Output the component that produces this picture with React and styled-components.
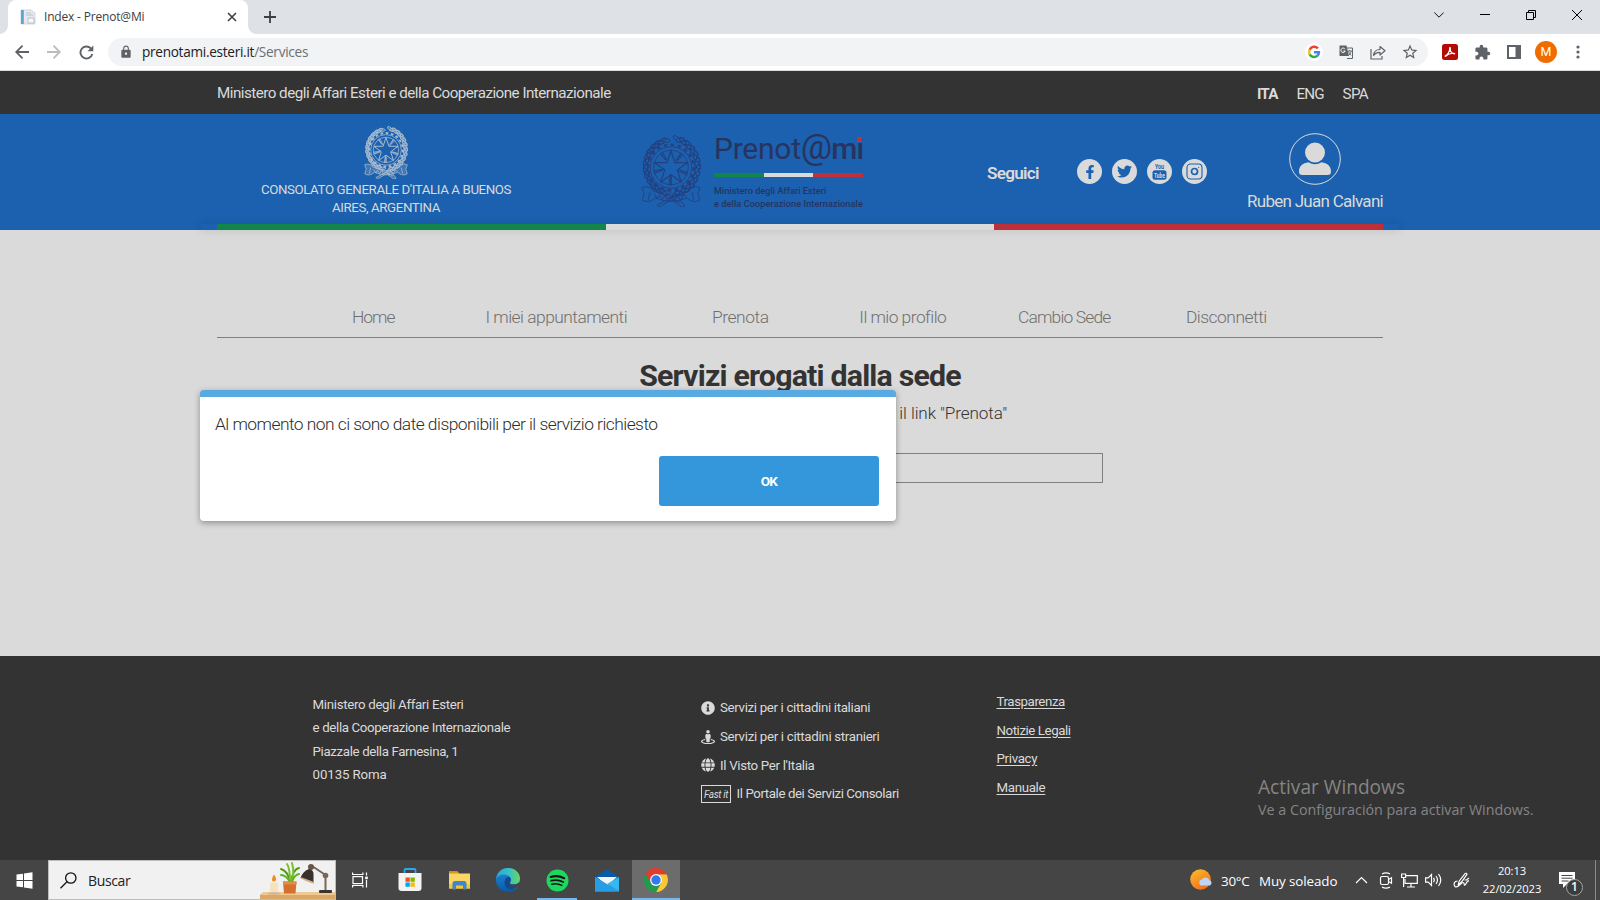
import React from 'react';
import styled, { createGlobalStyle, css } from 'styled-components';
import { FaTwitter, FaFacebookF, FaInfoCircle, FaStreetView, FaGlobe } from 'react-icons/fa';
import { MdExtension, MdStarOutline, MdLock } from 'react-icons/md';

const GlobalStyle = createGlobalStyle`
  *, *::before, *::after { box-sizing: border-box; }
  body { margin: 0; overflow: hidden; }
  svg { display: block; flex: none; }
`;

const web = css`font-family: Roboto, "Liberation Sans", sans-serif;`;
const ui = css`font-family: "Open Sans", "Noto Sans", sans-serif;`;

const Screen = styled.div`
  position: relative;
  display: flex;
  flex-direction: column;
  width: 1600px;
  height: 900px;
  overflow: hidden;
  background: #dadada;
`;

const Text = styled.span`
  white-space: nowrap;
  letter-spacing: ${(p) => p.$ls || 0}px;
`;

/* ---------- browser window ---------- */
const TabStrip = styled.div`
  ${ui}
  display: flex;
  height: 34px;
  padding-left: 8px;
  background: #dee1e6;
`;
const Tab = styled.div`
  position: relative;
  display: flex;
  align-items: center;
  width: 240px;
  padding: 0 10px 0 12px;
  border-radius: 8px 8px 0 0;
  background: #fff;
  color: #3c4043;
  font-size: 12px;
  &::before, &::after {
    content: '';
    position: absolute;
    bottom: 0;
    width: 8px;
    height: 8px;
  }
  &::before { left: -8px; background: radial-gradient(circle at 0 0, transparent 7.5px, #fff 8px); }
  &::after { right: -8px; background: radial-gradient(circle at 100% 0, transparent 7.5px, #fff 8px); }
`;
const TabTitle = styled(Text)`flex: 1; margin-left: 8px; line-height: 18px; padding-bottom: 1px;`;
const NewTab = styled.div`
  display: flex;
  align-items: center;
  justify-content: center;
  width: 44px;
`;
const WindowControls = styled.div`display: flex; margin-left: auto; height: 29px;`;
const WindowControl = styled.div`
  display: flex;
  align-items: center;
  justify-content: center;
  width: 46px;
`;
const Toolbar = styled.div`
  ${ui}
  display: flex;
  align-items: center;
  height: 37px;
  padding: 0 6px;
  background: #fff;
  border-bottom: 1px solid #d8dadd;
`;
const ToolCell = styled.div`
  display: flex;
  align-items: center;
  justify-content: center;
  width: 32px;
  height: 28px;
  color: #5f6368;
`;
const AddressBar = styled.div`
  display: flex;
  align-items: center;
  flex: 1;
  height: 28px;
  margin-left: 6px;
  margin-right: 6px;
  padding: 0 2px 0 11px;
  border-radius: 14px;
  background: #f1f3f4;
  color: #202124;
  font-size: 13.6px;
`;
const Url = styled(Text)`flex: 1; margin-left: 9px; line-height: 20px; em { font-style: normal; color: #6b6f74; }`;
const Avatar = styled.div`
  ${web}
  width: 22px;
  height: 22px;
  border-radius: 50%;
  background: #ef6c00;
  color: #fff;
  font-size: 12.5px;
  line-height: 22px;
  text-align: center;
`;

/* ---------- site header ---------- */
const TopBar = styled.div`
  ${web}
  display: flex;
  align-items: center;
  height: 43px;
  padding: 1px 232px 0 217px;
  background: #333;
  color: #dadada;
  font-size: 15.2px;
`;
const Languages = styled.div`display: flex; gap: 18.8px; margin-left: auto; padding-top: 1px;`;
const Language = styled(Text)`font-weight: ${(p) => (p.$active ? 700 : 400)};`;
const Header = styled.header`
  ${web}
  display: flex;
  flex-direction: column;
  align-items: center;
  height: 116px;
  background: #1b61af;
  color: #dadada;
`;
const HeaderInner = styled.div`display: flex; width: 1166px; height: 110px;`;
const Consulate = styled.div`
  display: flex;
  flex-direction: column;
  align-items: center;
  width: 338px;
  margin-right: 2px;
  padding-top: 12px;
  font-size: 13.3px;
  line-height: 18px;
  svg { margin-bottom: 2px; }
`;
const Brand = styled.div`display: flex; width: 430px; padding: 21px 0 0 83px; color: #28345f;`;
const BrandCopy = styled.div`display: flex; flex-direction: column; width: 149px; margin-left: 12px;`;
const WordMark = styled.div`
  display: flex;
  align-items: baseline;
  height: 38px;
  font-size: 30px;
  font-weight: 400;
  line-height: 25px;
  letter-spacing: -.25px;
`;
const At = styled.span`width: 31px; font-size: 35px; font-weight: 400; letter-spacing: -1px;`;
const Mi = styled.span`position: relative; font-weight: 500; letter-spacing: -.9px;`;
const RedDot = styled.i`position: absolute; right: 1px; top: 1px; width: 5px; height: 5px; background: #cf2b31;`;
const BrandStripe = styled.div`
  height: 4px;
  margin-bottom: 8px;
  background: linear-gradient(90deg, #12864a 0 33.3%, #dadada 33.3% 66.6%, #c12f3a 66.6%);
`;
const BrandLine = styled(Text)`font-size: 9.2px; font-weight: 500; line-height: 12.5px;`;
const Social = styled.div`display: flex; width: 260px; padding-top: 45px;`;
const Follow = styled(Text)`width: 90px; font-size: 17.2px; font-weight: 600; line-height: 29px;`;
const SocialList = styled.div`display: flex; gap: 10px;`;
const SocialButton = styled.div`
  display: flex;
  align-items: center;
  justify-content: center;
  width: 25px;
  height: 25px;
  border-radius: 50%;
  background: #dadada;
  color: #1b61af;
`;
const User = styled.div`
  display: flex;
  flex-direction: column;
  align-items: center;
  width: 136px;
  padding-top: 19px;
  font-size: 17px;
`;
const UserName = styled(Text)`line-height: 24px; margin-top: 3.5px;`;
const Tricolor = styled.div`
  width: 1198px;
  height: 6px;
  padding: 0 16px;
  box-shadow: 0 0 10px rgba(0, 0, 0, .14);
  &::before {
    content: '';
    display: block;
    height: 6px;
    background: linear-gradient(90deg, #12864a 0 389px, #dadada 389px 777px, #bb3039 777px);
  }
`;

/* ---------- page body ---------- */
const Main = styled.main`
  ${web}
  position: relative;
  display: flex;
  flex-direction: column;
  align-items: center;
  height: 426px;
  padding-top: 76px;
  color: #333;
`;
const Nav = styled.nav`
  display: grid;
  grid-template-columns: 183px 183px 185px 140px 183px 141px;
  width: 1166px;
  height: 32px;
  padding-left: 64.8px;
  border-bottom: 1px solid #7f7f7f;
  color: #6f6f6f;
  font-size: 17.4px;
  font-weight: 300;
  line-height: 23px;
  text-align: center;
`;
const Title = styled.h1`
  margin: 18px 0 6px;
  font-size: 30.3px;
  font-weight: 700;
  line-height: 40px;
  letter-spacing: -.8px;
  white-space: nowrap;
`;
const Intro = styled.p`
  align-self: flex-end;
  margin: 0 593px 28px 0;
  font-size: 17.1px;
  font-weight: 300;
  line-height: 23px;
`;
const SearchBox = styled.div`width: 606px; height: 30px; border: 1px solid #7f7f7f;`;
const Dialog = styled.div`
  position: absolute;
  left: 200px;
  top: 160px;
  display: flex;
  flex-direction: column;
  width: 696px;
  height: 131px;
  padding: 16px 17px 15px 15px;
  border-top: 7px solid #58aae3;
  border-radius: 4px;
  background: #fff;
  box-shadow: 0 2px 6px rgba(0, 0, 0, .35);
  color: #2c2c2c;
  font-size: 17.4px;
  font-weight: 300;
  line-height: 23px;
`;
const OkButton = styled.button`
  ${web}
  align-self: flex-end;
  width: 220px;
  height: 50px;
  margin-top: auto;
  padding-bottom: 2px;
  border: 0;
  border-radius: 3px;
  background: #3597db;
  color: #fff;
  font-size: 13.6px;
  font-weight: 700;
  letter-spacing: -.7px;
`;

/* ---------- site footer ---------- */
const Footer = styled.footer`
  ${web}
  display: flex;
  height: 204px;
  padding: 31px 0 0 312px;
  background: #333;
  color: #dadada;
  font-size: 13.3px;
`;
const Address = styled.div`
  display: flex;
  flex-direction: column;
  width: 389px;
  padding: 6px 0 0 .6px;
  line-height: 23.3px;
`;
const Services = styled.div`display: flex; flex-direction: column; width: 295px; padding-top: 6.5px;`;
const Service = styled.div`display: flex; align-items: center; gap: 5px; height: 28.7px;`;
const FastIt = styled.span`
  width: 30px;
  height: 18px;
  margin-right: .5px;
  border: 1px solid #dadada;
  font-size: 10px;
  font-style: italic;
  line-height: 17px;
  text-align: center;
  letter-spacing: -.35px;
`;
const Legal = styled.div`
  display: flex;
  flex-direction: column;
  padding: 1px 0 0 .5px;
  line-height: 28.6px;
  span { text-decoration: underline; text-underline-offset: 2px; }
`;
const Watermark = styled.div`
  ${ui}
  position: absolute;
  left: 1258px;
  top: 774px;
  display: flex;
  flex-direction: column;
  color: #858585;
  font-size: 14.3px;
  line-height: 20px;
`;
const WatermarkTitle = styled(Text)`font-size: 19.1px; line-height: 27px; margin-bottom: -1px;`;

/* ---------- taskbar ---------- */
const Taskbar = styled.div`
  ${ui}
  display: flex;
  height: 40px;
  background: #454545;
  color: #fff;
`;
const Start = styled.div`display: flex; align-items: center; justify-content: center; width: 48px;`;
const TaskSearch = styled.div`
  display: flex;
  align-items: center;
  width: 288px;
  padding-left: 11px;
  border: 1px solid #bdbdbd;
  background: #f1f1f1;
  color: #222;
  font-size: 14px;
`;
const SearchLabel = styled(Text)`flex: 1; margin-left: 11px;`;
const Apps = styled.div`display: flex; gap: 1.33px;`;
const AppSlot = styled.div`
  display: flex;
  align-items: center;
  justify-content: center;
  width: 48px;
  padding-left: ${(p) => p.$nudge || 0}px;
  background: ${(p) => (p.$active ? '#6c6c6c' : 'transparent')};
  background-image: ${(p) => (p.$bar ? 'linear-gradient(#76b9ed, #76b9ed)' : 'none')};
  background-size: ${(p) => p.$bar || 0}px 2px;
  background-position: center bottom;
  background-repeat: no-repeat;
`;
const Tray = styled.div`display: flex; align-items: center; margin-left: auto;`;
const Weather = styled.div`
  display: flex;
  align-items: center;
  width: 164px;
  font-size: 13.4px;
`;
const Temp = styled(Text)`width: 38px; margin-left: 8px; padding-top: 1px;`;
const Sky = styled(Text)`padding-top: 1px;`;
const TrayCell = styled.div`
  display: flex;
  align-items: center;
  justify-content: center;
  width: ${(p) => p.$w}px;
`;
const Clock = styled.div`
  display: flex;
  flex-direction: column;
  align-items: center;
  width: 76px;
  margin-left: 3px;
  font-size: 11.2px;
  line-height: 18px;
`;
const Notifications = styled.div`
  position: relative;
  width: 46px;
  height: 40px;
  padding: 12px 0 0 9px;
  border-right: 1px solid #8a8a8a;
  margin-right: 4px;
`;
const Badge = styled.span`
  position: absolute;
  left: 16px;
  top: 19px;
  width: 17px;
  height: 17px;
  border: 1px solid #a5a5a5;
  border-radius: 50%;
  background: #3c3c3c;
  font-size: 12px;
  font-weight: 600;
  line-height: 14px;
  text-align: center;
`;

/* ---------- drawings ---------- */
const star = (cx, cy, R, r) =>
  Array.from({ length: 10 }, (_, i) => {
    const a = (-90 + i * 36) * (Math.PI / 180);
    const d = i % 2 ? r : R;
    return `${(cx + d * Math.cos(a)).toFixed(2)},${(cy + d * Math.sin(a)).toFixed(2)}`;
  }).join(' ');

const leafAngles = Array.from({ length: 12 }, (_, i) => 105 + i * 13.5);

function Emblem({ width, height, color, fill = 'none', weight = 0.8, opacity = 1 }) {
  const leaves = (mirror) =>
    leafAngles.map((deg) => {
      const a = (deg * Math.PI) / 180;
      const x = 30.5 + 25.5 * Math.cos(a) * (mirror ? -1 : 1);
      const y = 31 + 27 * Math.sin(a);
      const turn = mirror ? -deg - 90 : deg + 90;
      return [-22, 22].map((t) => (
        <ellipse key={`${mirror}${deg}${t}`} cx={x + (t / 22) * 1.8} cy={y} rx="4.6" ry="1.9"
          transform={`rotate(${turn + (mirror ? 180 : 0) + t} ${x} ${y})`} />
      ));
    });
  return (
    <svg width={width} height={height} viewBox="0 0 61 71" fill={fill} stroke={color} strokeWidth={weight} opacity={opacity}>
      {leaves(false)}
      {leaves(true)}
      <circle cx="30.5" cy="32" r="20.5" fill="none" />
      <circle cx="30.5" cy="32" r="22.5" fill="none" strokeDasharray="3.5 3.5" strokeWidth={weight * 2.6} />
      <circle cx="30.5" cy="32" r="17" fill="none" />
      <polygon points={star(30.5, 32.5, 17, 6.6)} fill="none" strokeWidth={weight * 1.3} />
      {[0, 72, 144, 216, 288].map((d) => (
        <path key={d} d="M25 25 L20 18 M36 25 L41 18 M27 26 L22 16.500" fill="none" transform={`rotate(${d} 30.5 32)`} />
      ))}
      <path d="M2 52 Q8 49 13 55 Q30 64 48 55 Q53 49 59 52 L57 58 L59 64 Q53 68 46 62 Q30 69 15 62 Q8 68 2 64 L4 58 Z M10 56 L8 64 M51 56 L53 64" />
      <path d="M14 58 l3 5 2 -4 3 5 2 -4 4 5 3 -5 3 5 3 -5 3 4 3 -5 3 2" fill="none" />
      <path d="M17 69 L36 59 L44 70 L41 71 L31 64 L19 71 Z M25 60 L40 67" />
    </svg>
  );
}

const Favicon = () => (
  <svg width="16" height="16" viewBox="0 0 16 16">
    <path d="M1 1h10l4 3v11H1z" fill="#e7e9ec" stroke="#c5c9ce" strokeWidth=".7" />
    <path d="M1 1h2.800v14H1z" fill="#5aa5d6" />
    <path d="M6 4h5M6 6h7M8 9h6v5H8z" stroke="#b7bcc3" fill="#f7f7f7" strokeWidth=".9" />
  </svg>
);

const GoogleG = () => (
  <svg width="18" height="18" viewBox="0 0 18 18">
    <circle cx="9" cy="9" r="9" fill="#fff" />
    <g fill="none" strokeWidth="2.500">
      <path d="M12.900 5.300A5 5 0 0 0 4.600 6.700" stroke="#ea4335" />
      <path d="M4.600 6.700a5 5 0 0 0 0 4.600" stroke="#fbbc05" />
      <path d="M4.600 11.300a5 5 0 0 0 7.900 1.300" stroke="#34a853" />
      <path d="M12.400 12.700A5 5 0 0 0 13.900 9.200H9" stroke="#4285f4" />
    </g>
  </svg>
);

const TranslateIcon = () => (
  <svg width="15" height="15" viewBox="0 0 15 15">
    <path d="M6 3h7.500v10.500H8" fill="#f1f3f4" stroke="#5f6368" />
    <path d="M.5.5h7l2.500 10.500H.5z" fill="#5f6368" />
    <path d="M6 4.200A2.200 2.200 0 1 0 6.200 6H4.300" fill="none" stroke="#fff" strokeWidth="1" />
    <path d="M8.500 6h4.500M10.700 5v1M9.200 6.500l3 4M12.300 6.200q-.8 3-3 4.500" fill="none" stroke="#5f6368" strokeWidth=".9" />
  </svg>
);

const ShareIcon = () => (
  <svg width="16" height="15" viewBox="0 0 16 15" fill="none" stroke="#5f6368" strokeWidth="1.200">
    <path d="M1 4v10h11v-3" />
    <path d="M3.500 10.500C4 6.500 6.500 4.500 10 4.500V1.500l5 4.300-5 4.200V7.300C7 7.300 5 8.300 3.500 10.500z" strokeLinejoin="round" />
  </svg>
);

const PdfIcon = () => (
  <svg width="16" height="16" viewBox="0 0 16 16">
    <rect width="16" height="16" rx="2.500" fill="#b30b00" />
    <path d="M3.500 11.800C5.500 11 8 7 7.700 4.200 7.600 3 8.700 3.200 8.300 4.800 8 7.500 10.500 10 12.700 9.800 13 9 7 8.700 4 12c-.7.600-1.200.200-.5-.2z" fill="none" stroke="#fff" strokeWidth="1.150" />
  </svg>
);

const YouTubeIcon = () => (
  <svg width="21" height="23" viewBox="-2 -2 21 23" fill="#1b61af" fontFamily="Roboto" fontWeight="700">
    <text x="4" y="7.200" fontSize="7.500" textLength="9" lengthAdjust="spacingAndGlyphs">You</text>
    <rect x="1.500" y="8.200" width="14" height="9.500" rx="2.500" />
    <text x="3" y="15.700" fontSize="7.500" textLength="11" lengthAdjust="spacingAndGlyphs" fill="#dadada">Tube</text>
  </svg>
);

const InstagramIcon = () => (
  <svg width="17" height="17" viewBox="0 0 17 17" fill="none" stroke="#1b61af">
    <rect x="1" y="1" width="15" height="15" rx="3.500" strokeWidth="1.100" />
    <circle cx="8.500" cy="8.500" r="3" strokeWidth="1.700" />
    <circle cx="12.700" cy="4.300" r=".6" fill="#1b61af" stroke="none" />
  </svg>
);

const UserIcon = () => (
  <svg width="52" height="52" viewBox="0 0 52 52">
    <circle cx="26" cy="26" r="25.300" fill="none" stroke="#dadada" strokeWidth="1" />
    <circle cx="26" cy="19.500" r="10" fill="#dadada" />
    <path d="M10 38.500c0-6 4-8.500 9.500-9.300 4 2.600 9 2.600 13 0 5.500.8 9.500 3.300 9.500 9.300 0 2.500-1 3.500-3.500 3.500h-25c-2.500 0-3.500-1-3.500-3.500z" fill="#dadada" />
  </svg>
);

const DeskScene = () => (
  <svg width="76" height="38" viewBox="0 0 76 38">
    <path d="M5 31h72v7H1v-4z" fill="#dca765" />
    <path d="M5 31h72v3H2z" fill="#efc98f" />
    <rect x="11" y="21.500" width="8" height="11" rx="1.500" fill="#f6e3bd" />
    <ellipse cx="15" cy="32.500" rx="6.500" ry="1.400" fill="#d9b691" />
    <path d="M15 13.500c3 4 2.500 7-.2 7-2.800 0-2-3.500.2-7z" fill="#f08a24" />
    <g fill="none" strokeLinecap="round" strokeWidth="2">
      <path d="M31 21Q29 10 22 8M32 21Q34 8 40 7" stroke="#4f9a1c" />
      <path d="M31 21Q31 7 28 3M32 21Q36 12 33 2" stroke="#78c12d" />
      <path d="M31 21Q27 14 22 14M33 21Q35 14 40 13" stroke="#5fae24" />
    </g>
    <path d="M24 20.500h13.500l-1 12h-11.500z" fill="#d5702c" />
    <path d="M24 20.500h13.500v3H24z" fill="#e6894a" />
    <path d="M53 5l13.500 9v16" fill="none" stroke="#7a6656" strokeWidth="2" />
    <circle cx="52" cy="6" r="3" fill="#65564b" />
    <circle cx="66.500" cy="14.500" r="2.800" fill="#7a6656" />
    <path d="M50 8q5 1 4.500 6v8L41.500 17Q44 10 50 8z" fill="#3b3129" />
    <path d="M41.500 16l13 4.700v2Q47 21 41.500 17z" fill="#c9b489" />
    <rect x="60" y="29" width="13" height="3" rx="1" fill="#3d342f" />
  </svg>
);

const StartIcon = () => (
  <svg width="17" height="17" viewBox="0 0 17 17" fill="#fff">
    <path d="M.5 2.600L7 1.700v6.300H.5zM8 1.500l8.500-1.200V8H8zM.5 9H7v6.300l-6.500-.9zM8 9h8.500v7.700L8 15.500z" />
  </svg>
);

const TaskViewIcon = () => (
  <svg width="17" height="16" viewBox="0 0 17 16" fill="none" stroke="#fff" strokeWidth="1.200">
    <rect x="1" y="4.600" width="9.500" height="7" />
    <path d="M.6.500v2h10.300v-2M.6 15.500v-2h10.300v2M14.500.500v3M14.500 8v7.500" />
    <rect x="13.200" y="4.600" width="2.600" height="2.600" fill="#fff" stroke="none" />
  </svg>
);

const StoreIcon = () => (
  <svg width="24" height="24" viewBox="0 0 24 24">
    <path d="M6.500 6V2.200Q6.500 1 7.700 1h8.600q1.200 0 1.200 1.200V6" fill="none" stroke="#27a9ec" strokeWidth="1.800" />
    <path d="M.5 5h23v15q0 3-3 3h-17q-3 0-3-3z" fill="#f3f3f3" />
    <path d="M7.500 9.500h4.300v4.300H7.500z" fill="#f25022" /><path d="M12.500 9.500h4.300v4.300h-4.300z" fill="#7fba00" />
    <path d="M7.500 14.500h4.300v4.300H7.500z" fill="#00a4ef" /><path d="M12.500 14.500h4.300v4.300h-4.300z" fill="#ffb900" />
  </svg>
);

const ExplorerIcon = () => (
  <svg width="23" height="19" viewBox="0 0 23 19">
    <path d="M1 .5h8.500l1.500 2H22v15H1z" fill="#fbd566" />
    <path d="M1 .5h8.500l1.300 2H1z" fill="#d99a17" />
    <path d="M1 13h21v4.500H1z" fill="#f5c443" />
    <path d="M4.500 18.500v-6q0-2.500 2.500-2.500h9q2.500 0 2.500 2.500v6h-3.500v-4H8v4z" fill="#3d88cb" />
  </svg>
);

const EdgeIcon = () => (
  <svg width="24" height="24" viewBox="0 0 24 24">
    <defs>
      <linearGradient id="edgeTop" x1="0" x2="1"><stop offset="0" stopColor="#27a7e0" /><stop offset=".55" stopColor="#36c2c4" /><stop offset="1" stopColor="#6bd55b" /></linearGradient>
      <linearGradient id="edgeSide" x1="0" y1="0" x2="0" y2="1"><stop offset="0" stopColor="#1f8fd8" /><stop offset="1" stopColor="#0b57a8" /></linearGradient>
    </defs>
    <circle cx="12" cy="12" r="12" fill="url(#edgeSide)" />
    <path d="M0 11C1 4.500 6 0 12 0c7 0 12 5 12 10.500 0 4-3 6-6.500 6-3 0-4-1-3.300-2.200C17 9.500 12 6.500 8 6.500 4 6.500 1 8.500 0 11z" fill="url(#edgeTop)" />
    <path d="M8.500 14c0-3 2-5 4-5.300 2.400.6 3 3.500 1.600 5.500-.8 1.400.4 2.300 3.400 2.300 2 0 3.500-.4 5.200-1.500C21 19 18 21.500 15 21.500c-4 0-6.500-3.500-6.500-7.500z" fill="#124a8e" />
    <path d="M14.100 14.200c-.8 1.400.4 2.300 3.400 2.300 2 0 3.800-.6 6-2v2l-1.700 3-4-.8c-3 .4-5.300-1.200-5-4.500z" fill="#454545" />
  </svg>
);

const SpotifyIcon = () => (
  <svg width="23" height="23" viewBox="0 0 23 23">
    <circle cx="11.500" cy="11.500" r="11" fill="#1ed760" />
    <g fill="none" stroke="#191414" strokeLinecap="round">
      <path d="M4.700 8q7-2.200 13.500 1.200" strokeWidth="2.100" />
      <path d="M5.200 11.700q6.300-1.800 12 1.300" strokeWidth="1.800" />
      <path d="M5.800 15.200q5.200-1.500 10 1.100" strokeWidth="1.500" />
    </g>
  </svg>
);

const MailIcon = () => (
  <svg width="24" height="23" viewBox="0 0 24 23">
    <path d="M0 8L12 0l12 8v6H0z" fill="#0a5aa8" />
    <path d="M2 8h20l-10 9z" fill="#f4f4f4" />
    <path d="M0 8l24 14.500H0z" fill="#2a9fe6" />
    <path d="M24 8v14.500L12 15z" fill="#35b8f1" />
    <path d="M0 22.500V8l24 14.500z" fill="#279de6" />
  </svg>
);

const ChromeIcon = () => (
  <svg width="24" height="24" viewBox="0 0 24 24">
    <path d="M12 6.300h10.500A12 12 0 0 1 12 24l5-9z" fill="#fcc934" />
    <path d="M1.600 6L7 15l10 0-5 9A12 12 0 0 1 1.600 6z" fill="#219c4d" />
    <path d="M1.600 6A12 12 0 0 1 22.500 6.300H12L7 14.800z" fill="#e33b2e" />
    <circle cx="12" cy="12" r="5.900" fill="#fff" />
    <circle cx="12" cy="12" r="4.700" fill="#2f7bee" />
  </svg>
);

const WeatherIcon = () => (
  <svg width="23" height="22" viewBox="0 0 23 22">
    <defs><linearGradient id="sun" x1="0" y1="0" x2=".6" y2="1"><stop offset="0" stopColor="#fbc02d" /><stop offset="1" stopColor="#f2701d" /></linearGradient></defs>
    <circle cx="10.500" cy="10.500" r="10.300" fill="url(#sun)" />
    <path d="M11.500 16.500a3 3 0 0 1 .4-5.900 4.200 4.200 0 0 1 7.500.4 2.900 2.900 0 0 1 .3 5.500z" fill="#bcd5f5" />
  </svg>
);

const trayStroke = { fill: 'none', stroke: '#fff', strokeWidth: 1.2 };
const MeetIcon = () => (
  <svg width="14" height="17" viewBox="0 0 14 17" {...trayStroke}>
    <rect x="1.500" y="4.500" width="8" height="8" rx="1.500" />
    <path d="M9.500 7.500l3-1.800v5.600l-3-1.800M3 2q4-2.300 8 0M3 15q4 2.300 8 0" />
  </svg>
);
const NetworkIcon = () => (
  <svg width="17" height="15" viewBox="0 0 17 15" {...trayStroke}>
    <path d="M5 2.600h11.300v7.800H4V6M10 10.500V14M6 14h8" />
    <path d="M.6 1h4v3.500H.6zM2.600 4.500V14" />
  </svg>
);
const SpeakerIcon = () => (
  <svg width="17" height="14" viewBox="0 0 17 14" {...trayStroke}>
    <path d="M.6 4.800h2.600L6.500 1.500v11L3.200 9.200H.6zM8.500 4.800q1.600 2.200 0 4.400M11 3q3 4 0 8M13.500 1q4.500 6 0 12" />
  </svg>
);
const PenIcon = () => (
  <svg width="17" height="17" viewBox="0 0 17 17" {...trayStroke}>
    <path d="M5 13.500L6.300 9 12 1.600q1.500-1 2 .8L8.500 10z" />
    <path d="M4.500 9C1 9 .3 12.500 2 14.500c3 2.500 6-4 8-4s.5 3 2 2.500S13 9 16 8.700M11.500 8h2l2.500-2" />
  </svg>
);

const NAV = [
  ['Home', -1], ['I miei appuntamenti', -0.52], ['Prenota', -0.4],
  ['Il mio profilo', -0.54], ['Cambio Sede', -0.82], ['Disconnetti', -0.48],
];
const ADDRESS = [
  ['Ministero degli Affari Esteri', -0.33], ['e della Cooperazione Internazionale', -0.37],
  ['Piazzale della Farnesina, 1', -0.37], ['00135 Roma', -0.12],
];
const SERVICES = [
  [<FaInfoCircle size={14} />, 'Servizi per i cittadini italiani', -0.34],
  [<FaStreetView size={14} />, 'Servizi per i cittadini stranieri', -0.32],
  [<FaGlobe size={14} />, "Il Visto Per l'Italia", -0.33],
  [<FastIt>Fast it</FastIt>, 'Il Portale dei Servizi Consolari', -0.42],
];
const LEGAL = [['Trasparenza', -0.43], ['Notizie Legali', -0.44], ['Privacy', -0.32], ['Manuale', -0.33]];

export default function App() {
  return (
    <Screen>
      <GlobalStyle />
      <TabStrip>
        <Tab>
          <Favicon />
          <TabTitle $ls={-0.18}>Index - Prenot@Mi</TabTitle>
          <svg width="12" height="10" viewBox="0 0 12 10" stroke="#3c4043" strokeWidth="1.600"><path d="M2 1l8 8M10 1L2 9" /></svg>
        </Tab>
        <NewTab>
          <svg width="12" height="12" viewBox="0 0 12 12" stroke="#3c4043" strokeWidth="1.800"><path d="M6 0v12M0 6h12" /></svg>
        </NewTab>
        <WindowControls>
          <WindowControl><svg width="10" height="6" viewBox="0 0 10 6" fill="none" stroke="#111"><path d="M.3.500L5 5.200 9.700.500" /></svg></WindowControl>
          <WindowControl><svg width="10" height="1" viewBox="0 0 10 1"><rect width="10" height="1" fill="#000" /></svg></WindowControl>
          <WindowControl><svg width="10" height="10" viewBox="0 0 10 10" fill="none" stroke="#000"><path d="M.5 2.500h7v7h-7zM2.500 2.500v-2h7v7h-2" /></svg></WindowControl>
          <WindowControl><svg width="10" height="10" viewBox="0 0 10 10" stroke="#000"><path d="M0 0l10 10M10 0L0 10" /></svg></WindowControl>
        </WindowControls>
      </TabStrip>
      <Toolbar>
        <ToolCell><svg width="14" height="14" viewBox="0 0 14 14" fill="none" stroke="#5f6368" strokeWidth="1.800"><path d="M14 7H1.500M7.500.700L1.200 7l6.300 6.300" /></svg></ToolCell>
        <ToolCell><svg width="14" height="14" viewBox="0 0 14 14" fill="none" stroke="#babcbe" strokeWidth="1.800"><path d="M0 7h12.500M6.500.700L12.800 7l-6.300 6.300" /></svg></ToolCell>
        <ToolCell><svg width="15" height="15" viewBox="0 0 15 15" fill="none" stroke="#5f6368" strokeWidth="1.900"><path d="M13.300 9A6 6 0 1 1 11.800 3.300L13.500 5" /><path d="M14.300.500v5.800H8.500z" fill="#5f6368" stroke="none" /></svg></ToolCell>
        <AddressBar>
          <MdLock size={14} color="#5f6368" />
          <Url $ls={-0.28}>prenotami.esteri.it<em>/Services</em></Url>
          <ToolCell><GoogleG /></ToolCell>
          <ToolCell><TranslateIcon /></ToolCell>
          <ToolCell><ShareIcon /></ToolCell>
          <ToolCell><MdStarOutline size={18} /></ToolCell>
        </AddressBar>
        <ToolCell><PdfIcon /></ToolCell>
        <ToolCell><MdExtension size={17} /></ToolCell>
        <ToolCell><svg width="14" height="14" viewBox="0 0 14 14"><rect x="1" y="1" width="12" height="12" fill="#fff" stroke="#5f6368" strokeWidth="2" /><rect x="8.500" width="5.500" height="14" fill="#5f6368" /></svg></ToolCell>
        <ToolCell><Avatar>M</Avatar></ToolCell>
        <ToolCell><svg width="4" height="14" viewBox="0 0 4 14" fill="#5f6368"><circle cx="2" cy="2" r="1.600" /><circle cx="2" cy="7" r="1.600" /><circle cx="2" cy="12" r="1.600" /></svg></ToolCell>
      </Toolbar>

      <TopBar>
        <Text $ls={-0.52}>Ministero degli Affari Esteri e della Cooperazione Internazionale</Text>
        <Languages>
          <Language $active $ls={-0.8}>ITA</Language>
          <Language $ls={-0.8}>ENG</Language>
          <Language $ls={-0.7}>SPA</Language>
        </Languages>
      </TopBar>
      <Header>
        <HeaderInner>
          <Consulate>
            <Emblem width={48} height={53} color="#dadada" fill="rgba(218,218,218,.25)" opacity={0.75} weight={1} />
            <Text $ls={-0.4}>CONSOLATO GENERALE D'ITALIA A BUENOS</Text>
            <Text $ls={-0.4}>AIRES, ARGENTINA</Text>
          </Consulate>
          <Brand>
            <Emblem width={62} height={72} color="#24407f" weight={0.9} />
            <BrandCopy>
              <WordMark>Prenot<At>@</At><Mi>mi<RedDot /></Mi></WordMark>
              <BrandStripe />
              <BrandLine>Ministero degli Affari Esteri</BrandLine>
              <BrandLine $ls={0.06}>e della Cooperazione Internazionale</BrandLine>
            </BrandCopy>
          </Brand>
          <Social>
            <Follow $ls={-0.75}>Seguici</Follow>
            <SocialList>
              <SocialButton><FaFacebookF size={14} /></SocialButton>
              <SocialButton><FaTwitter size={15} /></SocialButton>
              <SocialButton><YouTubeIcon /></SocialButton>
              <SocialButton><InstagramIcon /></SocialButton>
            </SocialList>
          </Social>
          <User>
            <UserIcon />
            <UserName $ls={-0.72}>Ruben Juan Calvani</UserName>
          </User>
        </HeaderInner>
        <Tricolor />
      </Header>

      <Main>
        <Nav>{NAV.map(([label, ls]) => <Text key={label} $ls={ls}>{label}</Text>)}</Nav>
        <Title>Servizi erogati dalla sede</Title>
        <Intro><Text $ls={-0.1}>il link "Prenota"</Text></Intro>
        <SearchBox />
        <Dialog>
          <Text $ls={-0.53}>Al momento non ci sono date disponibili per il servizio richiesto</Text>
          <OkButton>OK</OkButton>
        </Dialog>
      </Main>

      <Footer>
        <Address>{ADDRESS.map(([line, ls]) => <Text key={line} $ls={ls}>{line}</Text>)}</Address>
        <Services>
          {SERVICES.map(([icon, label, ls]) => (
            <Service key={label}>{icon}<Text $ls={ls}>{label}</Text></Service>
          ))}
        </Services>
        <Legal>{LEGAL.map(([label, ls]) => <Text key={label} $ls={ls}>{label}</Text>)}</Legal>
      </Footer>
      <Watermark>
        <WatermarkTitle>Activar Windows</WatermarkTitle>
        <Text>Ve a Configuración para activar Windows.</Text>
      </Watermark>

      <Taskbar>
        <Start><StartIcon /></Start>
        <TaskSearch>
          <svg width="17" height="17" viewBox="0 0 17 17" fill="none" stroke="#111" strokeWidth="1.300"><circle cx="10.800" cy="6" r="5.200" /><path d="M7 9.800L.5 16.300" /></svg>
          <SearchLabel $ls={-0.35}>Buscar</SearchLabel>
          <DeskScene />
        </TaskSearch>
        <Apps>
          <AppSlot><TaskViewIcon /></AppSlot>
          <AppSlot $nudge={2}><StoreIcon /></AppSlot>
          <AppSlot $nudge={2}><ExplorerIcon /></AppSlot>
          <AppSlot $nudge={1}><EdgeIcon /></AppSlot>
          <AppSlot $bar={40}><SpotifyIcon /></AppSlot>
          <AppSlot><MailIcon /></AppSlot>
          <AppSlot $active $bar={48}><ChromeIcon /></AppSlot>
        </Apps>
        <Tray>
          <Weather><WeatherIcon /><Temp $ls={-0.25}>30°C</Temp><Sky $ls={-0.1}>Muy soleado</Sky></Weather>
          <TrayCell $w={14}><svg width="13" height="8" viewBox="0 0 13 8" {...trayStroke}><path d="M1 7l5.500-5.500L12 7" /></svg></TrayCell>
          <TrayCell $w={36}><MeetIcon /></TrayCell>
          <TrayCell $w={11}><NetworkIcon /></TrayCell>
          <TrayCell $w={37}><SpeakerIcon /></TrayCell>
          <TrayCell $w={19}><PenIcon /></TrayCell>
          <Clock><Text $ls={-0.1}>20:13</Text><Text $ls={-0.1}>22/02/2023</Text></Clock>
          <Notifications>
            <svg width="16" height="17" viewBox="0 0 16 17"><path d="M0 0h16v12H8l-4 4v-4H0z" fill="#fff" /><path d="M2.500 3.500h11M2.500 6.200h11M2.500 9h7" stroke="#454545" /></svg>
            <Badge>1</Badge>
          </Notifications>
        </Tray>
      </Taskbar>
    </Screen>
  );
}
